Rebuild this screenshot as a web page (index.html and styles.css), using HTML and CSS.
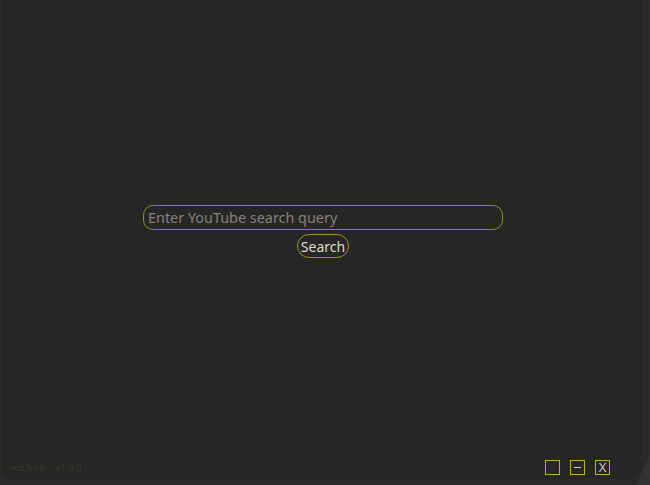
FILE: index.html
```html
<!DOCTYPE html>
<html>
<head>
<meta charset="utf-8">
<link rel="stylesheet" href="styles.css">
</head>
<body>
<div class="window">
  <main class="content">
    <form class="search">
      <input class="query" type="text" placeholder="Enter YouTube search query" autofocus>
      <button class="go" type="button">Search</button>
    </form>
  </main>
  <footer class="footer">
    <span class="version">vid.frnki - v1.0.0</span>
    <div class="controls">
      <span class="ctl"></span>
      <span class="ctl"><span class="dash"></span></span>
      <span class="ctl close">X</span>
    </div>
  </footer>
  <div class="grip"></div>
</div>
</body>
</html>
```
FILE: styles.css
```css
html, body {
  margin: 0;
  height: 100%;
  background: #2a2a2a;
  font-family: "Noto Sans", "DejaVu Sans", sans-serif;
}
.window {
  position: relative;
  height: 479px;
  width: 640px;
  margin-left: 2px;
  background: #262626;
  border-radius: 0 0 12px 12px;
  box-sizing: border-box;
  display: flex;
  flex-direction: column;
}
.content {
  flex: 1;
  display: flex;
  align-items: flex-start;
  justify-content: center;
  padding-top: 205px;
  padding-left: 2px;
}
.search {
  display: flex;
  flex-direction: column;
  align-items: center;
  gap: 5px;
}
.query {
  width: 360px;
  height: 25px;
  box-sizing: border-box;
  background: transparent;
  border: 1px solid #8f8f1c;
  border-radius: 10px;
  padding: 0 4px;
  font-family: inherit;
  font-size: 14.4px;
  color: #d8d4c4;
  outline: none;
  caret-color: #e8e8e8;
}
.query::placeholder {
  color: #86827a;
}
.go {
  height: 24px;
  margin-top: -1px;
  box-sizing: border-box;
  background: transparent;
  border: 1px solid #9a9a18;
  border-radius: 12px;
  padding: 0 3px;
  font-family: inherit;
  font-size: 14px;
  color: #e2dcc8;
  cursor: pointer;
}
.footer {
  display: flex;
  align-items: center;
  justify-content: space-between;
  padding: 0 32px 0 9px;
  height: 24px;
}
.version {
  font-size: 9.5px;
  color: #3c3c22;
}
.controls {
  display: flex;
  gap: 10px;
}
.ctl {
  width: 15px;
  height: 15px;
  box-sizing: border-box;
  border: 1.5px solid #b4b41c;
  display: flex;
  align-items: center;
  justify-content: center;
  font-size: 11px;
  line-height: 1;
  color: #d2cdb8;
}
.close {
  font-size: 13px;
}
.dash {
  width: 7px;
  height: 1px;
  background: #d2cdb8;
}
.grip {
  position: absolute;
  right: -8px;
  bottom: -6px;
  width: 14px;
  height: 30px;
  background: linear-gradient(to top left, #333 50%, transparent 50%);
}
```
